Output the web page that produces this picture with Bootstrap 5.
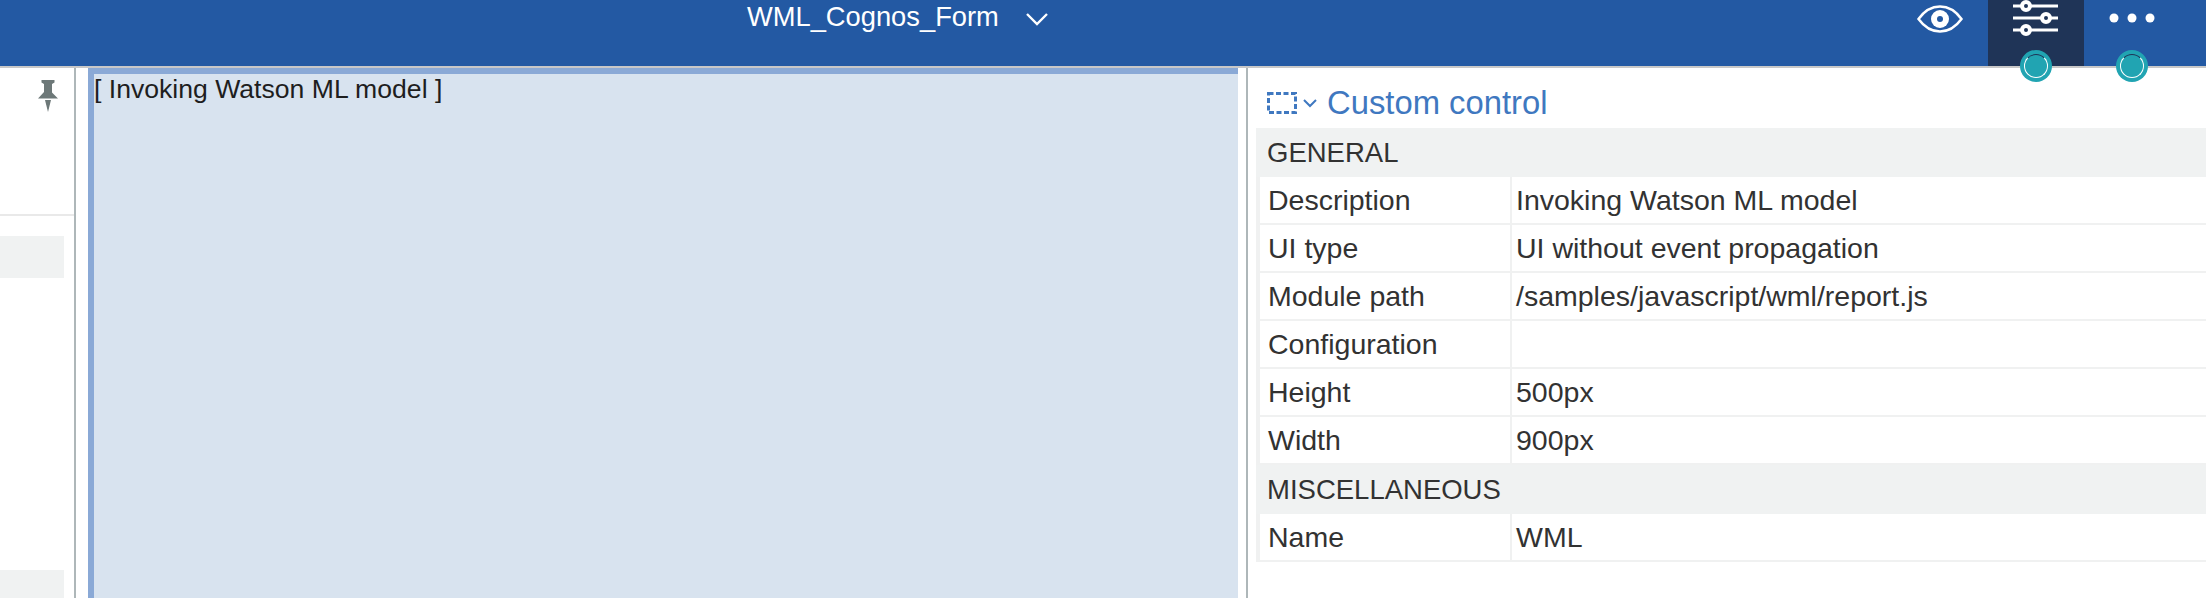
<!DOCTYPE html>
<html lang="en">
<head>
    <meta charset="UTF-8">
    <title>WML_Cognos_Form</title>
    <link rel="stylesheet" href="https://cdn.jsdelivr.net/npm/bootstrap@5.3.0/dist/css/bootstrap.min.css">
    <style>
        html, body { height: 598px; overflow: hidden; background: #fff; }
        body { font-family: "Liberation Sans", Arial, sans-serif; color: #323232; }
        .app-top { height: 68px; background: #2359a3; border-bottom: 2px solid #c8c8c8; }
        .app-title { width: 1988px; padding-top: 1px; padding-left: 747px; color: #fff; font-size: 27.3px; line-height: 32px; }
        .app-title svg { margin-left: 27px; }
        .top-eye { width: 96px; margin-left: -96px; padding-top: 5px; padding-left: 25px; }
        .top-tab { width: 96px; height: 66px; }
        .top-tab.is-on { background: #1f3457; }
        .tab-dot { position: absolute; left: 32px; top: 50px; width: 32px; height: 32px; border-radius: 50%; background: #21a4b2; z-index: 5; }
        .tab-dot::after { content: ""; position: absolute; inset: 4px; border-radius: 50%; border: 1px solid #fff; border-top-color: #1f3457; }
        .app-main { height: 530px; }
        .left-pane { width: 74px; }
        .pin-box { height: 148px; border-bottom: 2px solid #e9e9e9; padding: 12px 0 0 38px; }
        .left-block { width: 64px; background: #f0f2f2; }
        .left-block.one { height: 42px; margin-top: 20px; }
        .left-block.two { height: 28px; margin-top: 292px; }
        .pane-rule { width: 2px; background: #aeb7b9; }
        .canvas-zone { width: 1150px; margin-left: 12px; background: #d8e3ef; border-top: 6px solid #8aa9d6; border-left: 6px solid #8aa9d6; font-size: 26.6px; line-height: 30px; color: #1e1e1e; }
        .canvas-gap { width: 8px; }
        .prop-pane { flex: 1; padding-left: 8px; }
        .prop-head { height: 60px; padding-left: 11px; color: #3f78c0; font-size: 32.8px; line-height: 38px; padding-top: 10px; }
        .prop-caret { margin: 0 10px 0 6px; }
        .prop-table { width: 100%; margin: 0; table-layout: fixed; border-collapse: separate; border-spacing: 0; font-size: 28.5px; color: #323232; }
        .prop-table .key-col { width: 256px; }
        .prop-table th { height: 49px; background: #f0f2f2; padding: 0 0 0 11px; font-size: 27.5px; font-weight: 400; vertical-align: middle; }
        .prop-table td { height: 48px; padding: 0 0 0 4px; vertical-align: middle; border-bottom: 2px solid #f0f1f1; }
        .prop-table td:first-child { padding-left: 8px; border-left: 4px solid #f0f1f1; border-right: 2px solid #f0f1f1; }
    </style>
</head>
<body>
    <div class="app-top d-flex">
        <div class="app-title flex-shrink-0">WML_Cognos_Form<svg width="22" height="14" viewBox="0 0 22 14"><path d="M1 2l10 10L21 2" fill="none" stroke="#fff" stroke-width="2.4"/></svg></div>
        <div class="top-eye flex-shrink-0">
            <svg width="46" height="28" viewBox="0 0 46 28"><path d="M1.5 14C8 5 15 1.5 23 1.5S38 5 44.5 14C38 23 31 26.500 23 26.500S8 23 1.500 14Z" fill="none" stroke="#fff" stroke-width="2.500"/><circle cx="23" cy="14" r="9" fill="#fff"/><circle cx="23" cy="14" r="3" fill="#2359a3"/></svg>
        </div>
        <div class="top-tab is-on position-relative flex-shrink-0">
            <svg class="d-block ms-4" width="48" height="38" viewBox="0 0 48 38">
                <g stroke="#fff" stroke-width="3"><path d="M1 6h45M1 18h45M1 30h45"/></g>
                <g fill="#1f3457" stroke="#fff" stroke-width="4"><circle cx="14" cy="6" r="4"/><circle cx="34" cy="18" r="4"/><circle cx="14" cy="30" r="4"/></g>
            </svg>
            <span class="tab-dot"></span>
        </div>
        <div class="top-tab position-relative flex-shrink-0">
            <svg class="d-block" width="96" height="36" viewBox="0 0 96 36"><g fill="#fff"><circle cx="30" cy="18" r="4.500"/><circle cx="48" cy="18" r="4.500"/><circle cx="66" cy="18" r="4.500"/></g></svg>
            <span class="tab-dot"></span>
        </div>
    </div>
    <div class="app-main d-flex">
        <div class="left-pane flex-shrink-0">
            <div class="pin-box">
                <svg class="d-block" width="20" height="32" viewBox="0 0 20 32"><path d="M3.500 0h13v2.500l-2.500 1.500v8.500L20 18.500H0l6-6.500V4L3.500 2.500ZM7 20h6L10 32Z" fill="#6d7878"/></svg>
            </div>
            <div class="left-block one"></div>
            <div class="left-block two"></div>
        </div>
        <div class="pane-rule flex-shrink-0"></div>
        <div class="canvas-zone flex-shrink-0">[ Invoking Watson ML model ]</div>
        <div class="canvas-gap flex-shrink-0"></div>
        <div class="pane-rule flex-shrink-0"></div>
        <div class="prop-pane">
            <div class="prop-head d-flex align-items-center">
                <svg width="30" height="22" viewBox="0 0 30 22" class="flex-shrink-0"><rect x="1.500" y="1.500" width="27" height="19" fill="none" stroke="#3f78c0" stroke-width="3" stroke-dasharray="5 2.500"/></svg>
                <svg width="14" height="9" viewBox="0 0 14 9" class="flex-shrink-0 prop-caret"><path d="M1 1l6 6 6-6" fill="none" stroke="#3f78c0" stroke-width="2"/></svg>
                <span>Custom control</span>
            </div>
            <table class="prop-table">
                <colgroup><col class="key-col"><col></colgroup>
                <tr><th colspan="2">GENERAL</th></tr>
                <tr><td>Description</td><td>Invoking Watson ML model</td></tr>
                <tr><td>UI type</td><td>UI without event propagation</td></tr>
                <tr><td>Module path</td><td>/samples/javascript/wml/report.js</td></tr>
                <tr><td>Configuration</td><td></td></tr>
                <tr><td>Height</td><td>500px</td></tr>
                <tr><td>Width</td><td>900px</td></tr>
                <tr><th colspan="2">MISCELLANEOUS</th></tr>
                <tr><td>Name</td><td>WML</td></tr>
            </table>
        </div>
    </div>
    <script src="https://cdn.jsdelivr.net/npm/bootstrap@5.3.0/dist/js/bootstrap.bundle.min.js"></script>
</body>
</html>
